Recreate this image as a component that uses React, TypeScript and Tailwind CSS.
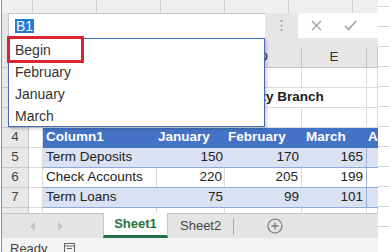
import React from "react";

// column widths: row header, A, B, C, D, E, F (partial)
const W = ["w-[27px]", "w-[14px]", "w-[114px]", "w-[68px]", "w-[77px]", "w-[65px]", "w-[11px]"];

const grid = "border-r border-b border-[#dadada]";

// rows 1-3 and columns A-C sit under the open name box list, so their labels are not drawn
function RowHead({ n }: { n?: number }) {
    return (
        <div className={`${W[0]} h-full shrink-0 bg-[#e8e8e8] border-r border-b border-[#c9c9c9] flex items-center justify-center text-[13.5px] text-[#444]`}>
            {n}
        </div>
    );
}

function EmptyRow({ n, children }: { n?: number; children?: React.ReactNode }) {
    return (
        <div className="flex h-[20px]">
            <RowHead n={n} />
            {children ?? W.slice(1).map((w, i) => <div key={i} className={`${w} shrink-0 ${grid}`} />)}
        </div>
    );
}

const data = [
    { name: "Term Deposits", jan: 150, feb: 170, mar: 165, band: true },
    { name: "Check Accounts", jan: 220, feb: 205, mar: 199, band: false },
    { name: "Term Loans", jan: 75, feb: 99, mar: 101, band: true },
];

export default function App() {
    return (
        <div className="relative w-[389px] h-[252px] overflow-hidden bg-white flex font-['Liberation_Sans',Arial,sans-serif] text-[#222]">
            <div className="ml-[1px] w-[377px] shrink-0 border-l border-[#6ea882] flex flex-col">
                {/* top strip */}
                <div className="h-[13px] flex bg-[#efefef]">
                    <div className="w-[30px] shrink-0" />
                    {[0, 1, 2, 3, 4, 5].map((i) => (
                        <div key={i} className="w-[64px] shrink-0 border-l border-[#d0d0d0]" />
                    ))}
                </div>

                {/* formula bar */}
                <div className="h-[34px] bg-[#e6e6e6] flex items-start">
                    <div className="ml-[6px] w-[257px] h-[25px] bg-white border-t border-l border-[#c8c8c8] flex items-center pl-[6px]">
                        <span className="bg-[#1f7ad6] text-white text-[14px] leading-[14px] px-[1px]">B1</span>
                    </div>
                    <div className="w-[33px] h-[25px] flex items-center justify-center">
                        <svg width="3" height="11" viewBox="0 0 3 11">
                            <rect x="0.5" y="0" width="2" height="2" fill="#a8a8a8" />
                            <rect x="0.5" y="4.5" width="2" height="2" fill="#a8a8a8" />
                            <rect x="0.5" y="9" width="2" height="2" fill="#a8a8a8" />
                        </svg>
                    </div>
                    <div className="w-[80px] h-[25px] bg-white flex items-center">
                        <svg className="ml-[13px]" width="11" height="11" viewBox="0 0 11 11">
                            <path d="M1 1 L10 10 M10 1 L1 10" stroke="#a0a0a0" strokeWidth="1.4" />
                        </svg>
                        <svg className="ml-[22px]" width="13" height="11" viewBox="0 0 13 11">
                            <path d="M1 6 L4.5 9.5 L12 1" stroke="#a0a0a0" strokeWidth="1.6" fill="none" />
                        </svg>
                    </div>
                </div>

                {/* column headers */}
                <div className="h-[21px] flex bg-[#e6e6e6] text-[13.5px] text-[#333]">
                    {["", "", "", "", "D", "E", ""].map((c, i) => (
                        <div key={i} className={`${W[i]} shrink-0 border-r border-b border-[#c4c4c4] flex items-center justify-center`}>
                            {c}
                        </div>
                    ))}
                </div>

                <EmptyRow />
                <EmptyRow>
                    <div className={`${W[1]} shrink-0 ${grid}`} />
                    <div className={`${W[2]} shrink-0 ${grid}`} />
                    <div className={`${W[3]} shrink-0 ${grid}`} />
                    <div className="w-[142px] shrink-0 border-r border-b border-[#dadada] flex items-center pl-[23px] text-[13.5px] font-bold whitespace-nowrap">
                        City Branch
                    </div>
                    <div className={`${W[6]} shrink-0 ${grid}`} />
                </EmptyRow>
                <EmptyRow />

                {/* table header */}
                <div className="flex h-[20px]">
                    <RowHead n={4} />
                    <div className={`${W[1]} shrink-0 ${grid}`} />
                    <div className="flex bg-[#4472c4] text-white font-bold text-[13.5px] border-b border-[#4472c4]">
                        <div className={`${W[2]} pl-[3px] flex items-center`}>Column1</div>
                        <div className={`${W[3]} pl-[1px] flex items-center`}>January</div>
                        <div className={`${W[4]} pl-[3px] flex items-center`}>February</div>
                        <div className={`${W[5]} pl-[4px] flex items-center`}>March</div>
                        <div className={`${W[6]} pl-[1px] flex items-center overflow-hidden`}>A</div>
                    </div>
                </div>

                {data.map((r, i) => (
                    <div key={r.name} className="flex h-[20px]">
                        <RowHead n={5 + i} />
                        <div className={`${W[1]} shrink-0 ${grid}`} />
                        <div className={`flex text-[13.5px] border-b border-[#8ea9db] ${r.band ? "bg-[#d9e1f2]" : "bg-white"}`}>
                            <div className={`${W[2]} pl-[3px] flex items-center ${r.band ? "" : "border-r border-[#dadada]"}`}>{r.name}</div>
                            <div className={`${W[3]} pr-[2px] flex items-center justify-end ${r.band ? "" : "border-r border-[#dadada]"}`}>{r.jan}</div>
                            <div className={`${W[4]} pr-[3px] flex items-center justify-end ${r.band ? "" : "border-r border-[#dadada]"}`}>{r.feb}</div>
                            <div className={`${W[5]} pr-[3px] flex items-center justify-end border-r border-[#9db0d6]`}>{r.mar}</div>
                            <div className={`${W[6]}`} />
                        </div>
                    </div>
                ))}

                {/* partial row 8 */}
                <div className="flex h-[5px]">
                    <div className={`${W[0]} shrink-0 bg-[#e8e8e8] border-r border-[#c9c9c9]`} />
                    {W.slice(1).map((w, i) => (
                        <div key={i} className={`${w} shrink-0 border-r border-[#dadada]`} />
                    ))}
                </div>

                {/* sheet tabs */}
                <div className="h-[25px] flex bg-[#e4e4e4] border-t border-[#c6c6c6] text-[13px]">
                    <div className="w-[101px] shrink-0 flex items-center">
                        <svg className="ml-[28px]" width="5" height="9" viewBox="0 0 5 9">
                            <path d="M5 0 L0 4.5 L5 9 Z" fill="#c4c4c4" />
                        </svg>
                        <svg className="ml-[23px]" width="5" height="9" viewBox="0 0 5 9">
                            <path d="M0 0 L5 4.5 L0 9 Z" fill="#c4c4c4" />
                        </svg>
                    </div>
                    <div className="w-[65px] shrink-0 -mt-px bg-white border-x border-[#c6c6c6] border-b-[3px] border-b-[#217346] flex items-center justify-center font-bold text-[#217346]">
                        Sheet1
                    </div>
                    <div className="w-[65px] shrink-0 flex items-center pl-[12px] text-[#444]">
                        <span>Sheet2</span>
                    </div>
                    <div className="w-px h-[17px] self-center bg-[#a8a8a8]" />
                    <div className="flex items-center ml-[33px]">
                        <svg width="16" height="16" viewBox="0 0 16 16">
                            <circle cx="8" cy="8" r="7" stroke="#7a7a7a" strokeWidth="1.2" fill="none" />
                            <path d="M8 4.5 V11.5 M4.5 8 H11.5" stroke="#7a7a7a" strokeWidth="1.3" />
                        </svg>
                    </div>
                </div>

                {/* status bar */}
                <div className="h-[14px] bg-[#f3f3f3] flex items-start overflow-hidden">
                    <span className="ml-[8px] mt-[4px] text-[13px] leading-[14px] text-[#444]">Ready</span>
                    <svg className="ml-[16px] mt-[5px]" width="11" height="9" viewBox="0 0 11 9">
                        <rect x="0.5" y="0.5" width="10" height="9" stroke="#666" fill="none" />
                        <path d="M0.5 3 H10.5 M3 5.5 H8" stroke="#666" />
                    </svg>
                </div>
            </div>

            {/* sliver of the sheet to the right */}
            <div className="flex-1 flex flex-col">
                <div className="h-[7px] border-b border-[#d6d6d6]" />
                {[0, 1, 2, 3, 4, 5, 6, 7, 8, 9, 10].map((i) => (
                    <div key={i} className="h-[20px] border-b border-[#d6d6d6]" />
                ))}
            </div>

            {/* name box dropdown */}
            <div className="absolute left-[8px] top-[38px] w-[257px] h-[89px] bg-white border border-[#3b6db8] shadow-[2px_2px_3px_rgba(0,0,0,0.18)] text-[14px] text-[#333]">
                {["Begin", "February", "January", "March"].map((t) => (
                    <div key={t} className="h-[22px] pl-[6px] flex items-center">{t}</div>
                ))}
            </div>
            <div className="absolute left-[7px] top-[36px] w-[77px] h-[27px] border-[3px] border-[#d7262d]" />
        </div>
    );
}
